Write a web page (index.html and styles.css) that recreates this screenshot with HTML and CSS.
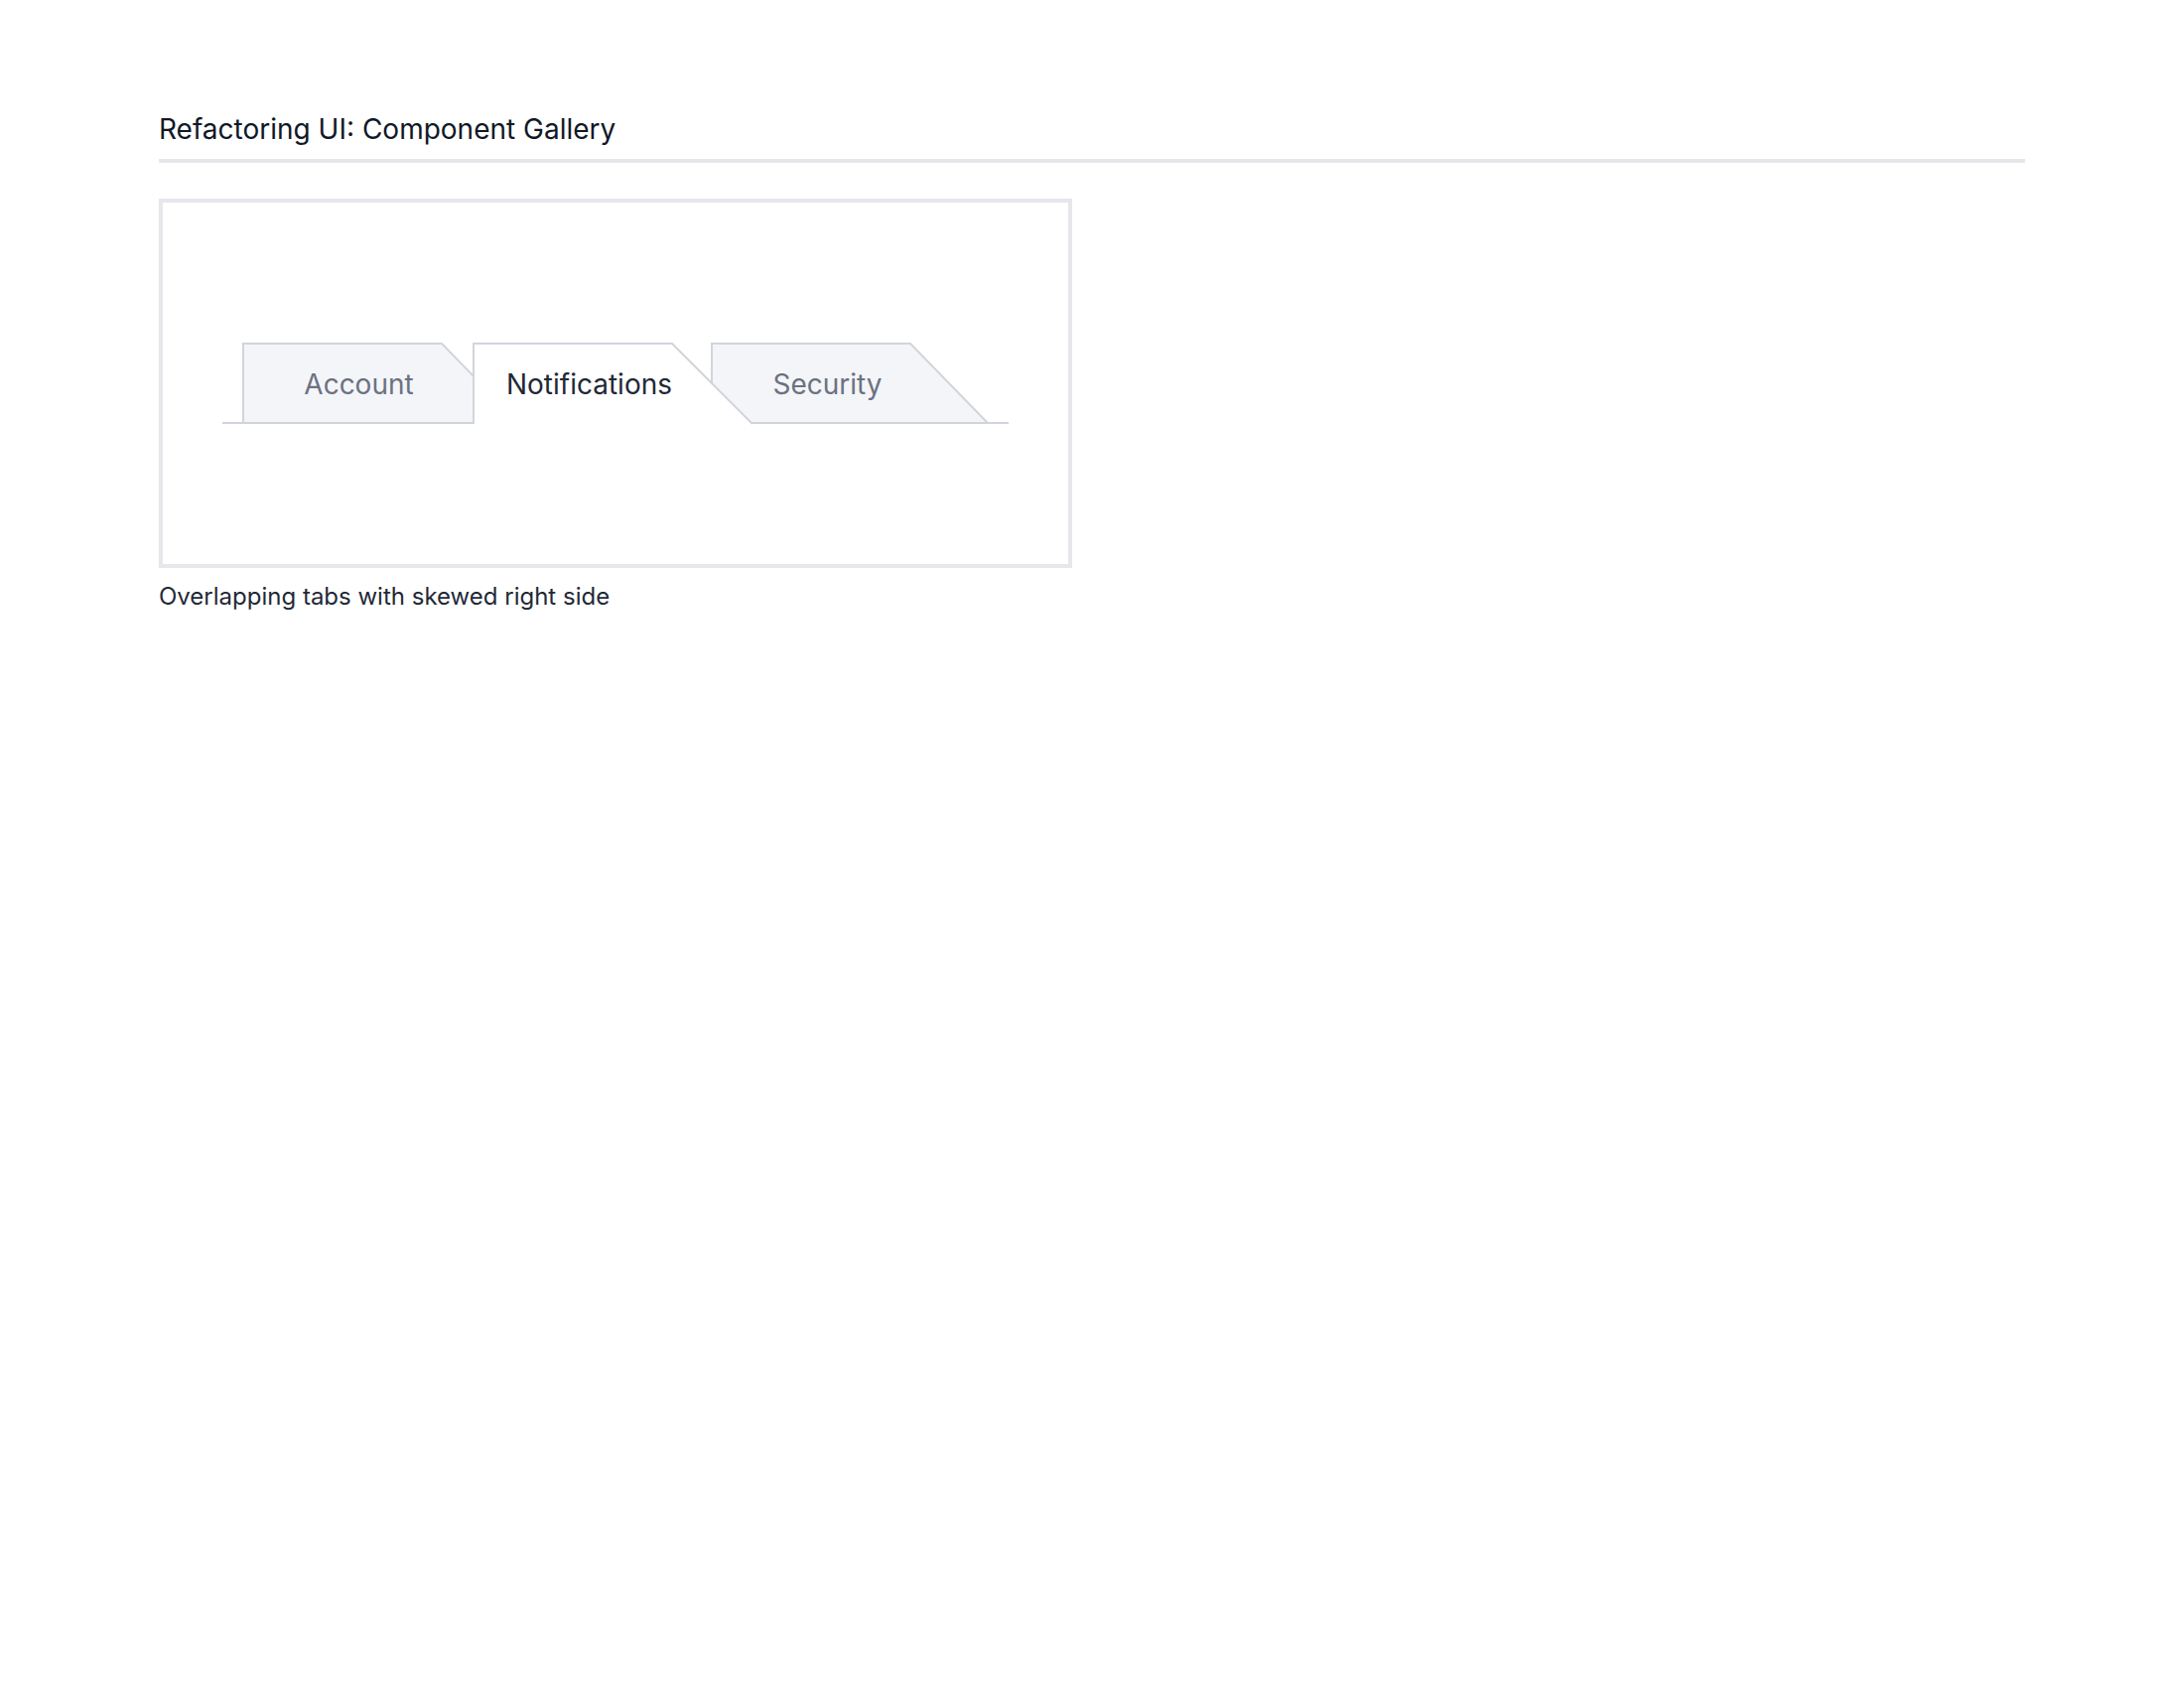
FILE: index.html
```html
<!DOCTYPE html>
<html lang="en">
<head>
<meta charset="utf-8">
<title>Refactoring UI: Component Gallery</title>
<link rel="stylesheet" href="styles.css">
</head>
<body>
<main class="page">
  <header class="page-header">
    <h1 class="page-title">Refactoring UI: Component Gallery</h1>
  </header>
  <section class="gallery">
    <figure class="specimen">
      <div class="specimen-frame">
        <nav class="tabs">
          <a class="tab tab-first" href="#">
            <svg class="tab-shape" viewBox="0 0 280 82" preserveAspectRatio="none"><polygon points="1,82 1,1 201,1 279,81 1,81" class="tab-fill"/><polyline points="1,82 1,1 201,1 279,81 0,81" class="tab-stroke"/></svg>
            <span class="tab-label">Account</span>
          </a>
          <a class="tab tab-active tab-second" href="#">
            <svg class="tab-shape" viewBox="0 0 280 82" preserveAspectRatio="none"><polygon points="1,82 1,1 201,1 282,82" class="tab-fill"/><polyline points="1,82 1,1 201,1 282,82" class="tab-stroke"/></svg>
            <span class="tab-label">Notifications</span>
          </a>
          <a class="tab tab-third" href="#">
            <svg class="tab-shape" viewBox="0 0 280 82" preserveAspectRatio="none"><polygon points="1,82 1,1 201,1 279,81 1,81" class="tab-fill"/><polyline points="1,82 1,1 201,1 279,81 0,81" class="tab-stroke"/></svg>
            <span class="tab-label">Security</span>
          </a>
        </nav>
      </div>
      <figcaption class="specimen-caption">Overlapping tabs with skewed right side</figcaption>
    </figure>
  </section>
</main>
</body>
</html>
```

FILE: styles.css
```css
html, body {
  margin: 0;
  padding: 0;
  background: #ffffff;
}

body {
  font-family: "Inter", "Noto Sans", sans-serif;
  color: #111827;
}

.page {
  padding: 0 160px;
}

.page-header {
  padding-top: 110px;
  padding-bottom: 10px;
  border-bottom: 4px solid #e5e7eb;
}

.page-title {
  margin: 0;
  font-size: 28px;
  line-height: 40px;
  font-weight: 400;
  color: #111827;
}

.gallery {
  padding-top: 36px;
}

.specimen {
  margin: 0;
  width: 920px;
}

.specimen-frame {
  box-sizing: border-box;
  height: 372px;
  border: 4px solid #e5e7eb;
  padding: 0 60px;
  display: flex;
  align-items: center;
}

.tabs {
  flex: 1;
  display: flex;
  padding: 0 20px;
  border-bottom: 2px solid #d1d5db;
}

.tab {
  position: relative;
  flex: 0 0 auto;
  width: 280px;
  height: 82px;
  margin-bottom: -2px;
  display: flex;
  align-items: center;
  justify-content: center;
  padding-top: 1px;
  padding-right: 45px;
  box-sizing: border-box;
  text-decoration: none;
  color: #6b7280;
  font-size: 28px;
}

.tab-second {
  margin-left: -48px;
  z-index: 2;
}

.tab-third {
  margin-left: -40px;
  z-index: 1;
}

.tab-shape {
  position: absolute;
  inset: 0;
  width: 100%;
  height: 100%;
  overflow: visible;
}

.tab-fill {
  fill: #f4f5f9;
}

.tab-stroke {
  fill: none;
  stroke: #d1d5db;
  stroke-width: 2;
}

.tab-active {
  color: #1f2937;
}

.tab-active .tab-fill {
  fill: #ffffff;
}

.tab-label {
  position: relative;
}

.specimen-caption {
  margin-top: 14px;
  font-size: 24px;
  line-height: 30px;
  color: #1f2937;
}
```
